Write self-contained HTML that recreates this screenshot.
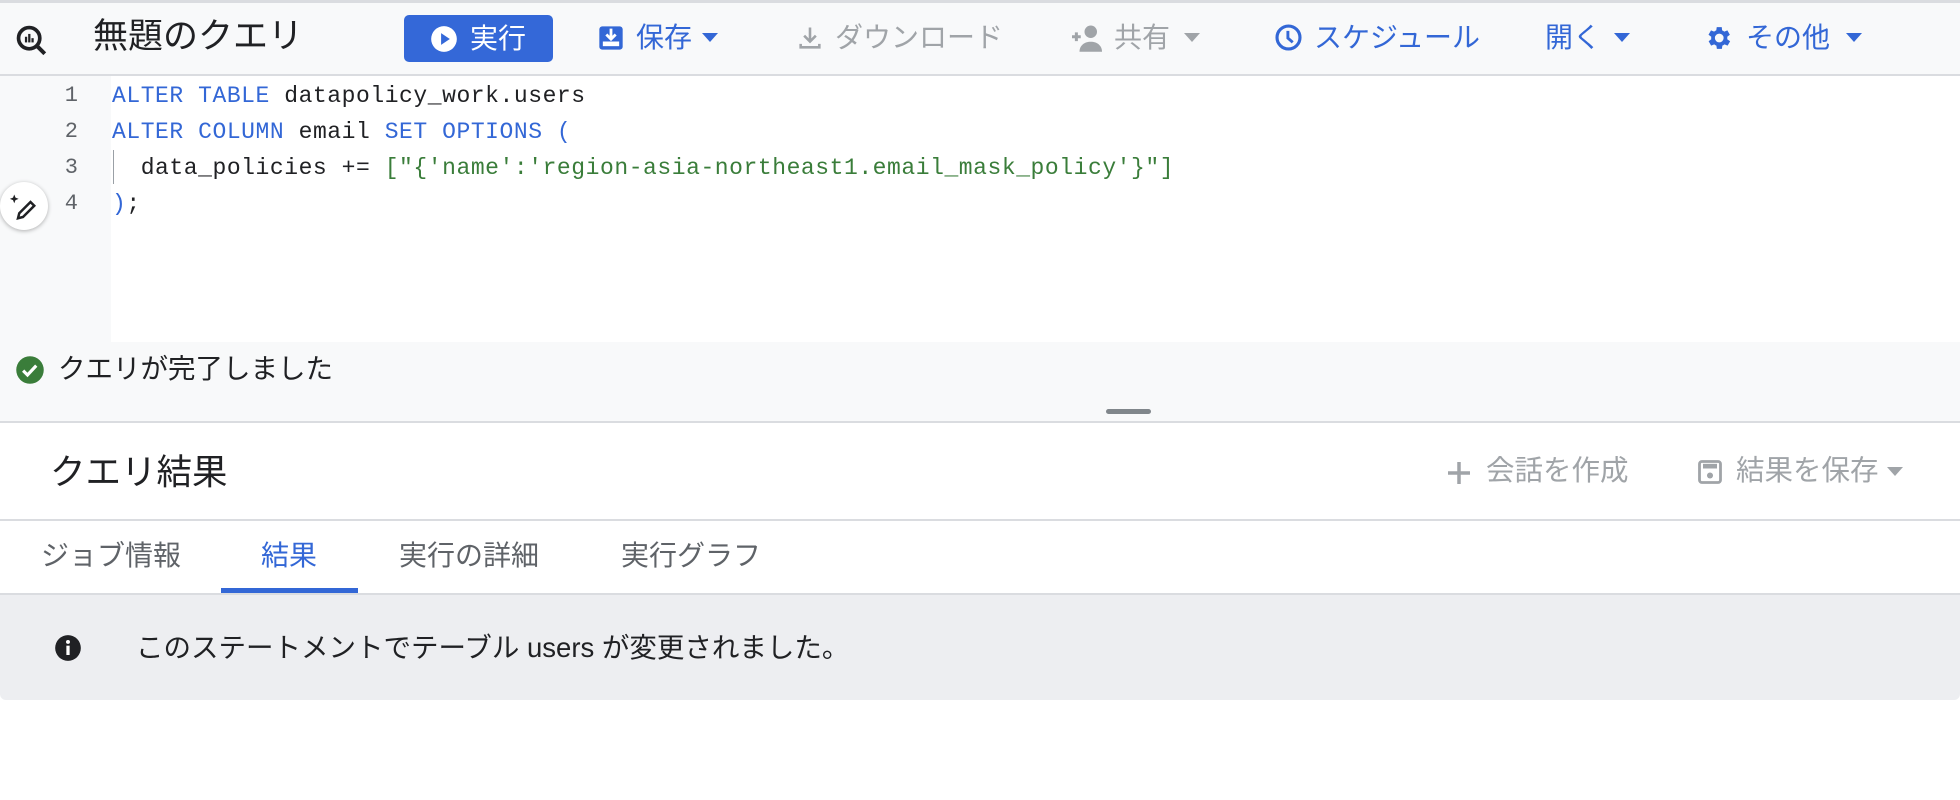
<!DOCTYPE html>
<html><head><meta charset="utf-8"><style>
*{margin:0;padding:0;box-sizing:border-box}
body{width:1960px;height:800px;background:#fff;position:relative;overflow:hidden;font-family:"Liberation Sans","Noto Sans CJK JP",sans-serif;color:#202124}
.a{position:absolute;white-space:nowrap}
.tb{font-size:28px;line-height:32px;color:#3367d6}
.g{color:#a0a4a8}
.code{font-family:"Liberation Mono",monospace;font-size:23px;line-height:36px;letter-spacing:0.55px}
.kw{color:#3367d6}.st{color:#3a7d3a}
.ln{font-family:"Liberation Mono",monospace;font-size:22px;color:#5f6368;width:30px;text-align:right}
</style></head><body>
<!-- toolbar -->
<div class="a" style="left:0;top:0;width:1960px;height:76px;background:#f8f9fa;border-top:3px solid #dadce0;border-bottom:2px solid #dadce0"></div>
<svg class="a" style="left:15px;top:24px" width="34" height="34" viewBox="0 0 24 24"><circle cx="10" cy="10" r="7.5" fill="none" stroke="#202124" stroke-width="2.6"/><line x1="15.5" y1="15.5" x2="21" y2="21" stroke="#202124" stroke-width="2.8"/><rect x="7" y="9" width="1.6" height="4" fill="#202124"/><rect x="9.3" y="7" width="1.6" height="6" fill="#202124"/><rect x="11.6" y="10" width="1.6" height="3" fill="#202124"/></svg>
<div class="a" style="left:93px;top:16px;font-size:35px;line-height:42px;color:#202124">無題のクエリ</div>
<div class="a" style="left:404px;top:15px;width:149px;height:47px;background:#3468d8;border-radius:5px"></div>
<svg class="a" style="left:430px;top:25px" width="28" height="28" viewBox="0 0 24 24"><circle cx="12" cy="12" r="11" fill="#fff"/><path d="M9.5 7v10l7.5-5z" fill="#3468d8"/></svg>
<div class="a tb" style="left:470px;top:23px;color:#fff">実行</div>
<svg class="a" style="left:597px;top:24px" width="28" height="28" viewBox="0 0 24 24"><rect x="2" y="2" width="20" height="20" rx="2.5" fill="#3367d6"/><path d="M12 4v8M8 9l4 4 4-4" stroke="#fff" stroke-width="2.4" fill="none"/><rect x="5" y="15" width="14" height="4" fill="#fff"/></svg>
<div class="a tb" style="left:636px;top:22px">保存</div>
<svg class="a" style="left:702px;top:33px" width="16" height="10"><path d="M0 0h16L8 9z" fill="#3367d6"/></svg>
<svg class="a" style="left:796px;top:24px" width="28" height="28" viewBox="0 0 24 24"><path d="M12 3v12M7 10l5 5 5-5M4 17v3h16v-3" stroke="#a0a4a8" stroke-width="2.2" fill="none"/></svg>
<div class="a tb g" style="left:835px;top:22px">ダウンロード</div>
<svg class="a" style="left:1070px;top:23px" width="34" height="30" viewBox="0 0 26 24"><path d="M1 11h7M4.5 7.5v7" stroke="#a0a4a8" stroke-width="2.4"/><circle cx="16" cy="7" r="5" fill="#a0a4a8"/><path d="M7 23c0-5 4-8 9-8s9 3 9 8z" fill="#a0a4a8"/></svg>
<div class="a tb g" style="left:1114px;top:22px">共有</div>
<svg class="a" style="left:1184px;top:33px" width="16" height="10"><path d="M0 0h16L8 9z" fill="#a0a4a8"/></svg>
<svg class="a" style="left:1274px;top:23px" width="29" height="29" viewBox="0 0 24 24"><circle cx="12" cy="12" r="9.5" fill="none" stroke="#3367d6" stroke-width="2.6"/><path d="M11.5 6.5v6l4 3.5" stroke="#3367d6" stroke-width="2.4" fill="none"/></svg>
<div class="a tb" style="left:1314px;top:22px">スケジュール</div>
<div class="a tb" style="left:1545px;top:22px">開く</div>
<svg class="a" style="left:1614px;top:33px" width="16" height="10"><path d="M0 0h16L8 9z" fill="#3367d6"/></svg>
<svg class="a" style="left:1703px;top:23px" width="30" height="30" viewBox="0 0 24 24"><path fill="#3367d6" d="M19.4 13a7.5 7.5 0 000-2l2.1-1.6-2-3.5-2.5 1a7 7 0 00-1.7-1L15 3.3h-4l-.4 2.6a7 7 0 00-1.7 1l-2.5-1-2 3.5L6.6 11a7.5 7.5 0 000 2l-2.1 1.6 2 3.5 2.5-1a7 7 0 001.7 1l.4 2.6h4l.4-2.6a7 7 0 001.7-1l2.5 1 2-3.5zM13 15.5a3.5 3.5 0 110-7 3.5 3.5 0 010 7z"/></svg>
<div class="a tb" style="left:1746px;top:22px">その他</div>
<svg class="a" style="left:1846px;top:33px" width="16" height="10"><path d="M0 0h16L8 9z" fill="#3367d6"/></svg>
<!-- editor -->
<div class="a" style="left:0;top:76px;width:111px;height:266px;background:#f8f9fa"></div>
<div class="a ln" style="left:48px;top:78px;line-height:36px">1<br>2<br>3<br>4</div>
<div class="a code" style="left:112px;top:78px">
<div><span class="kw">ALTER TABLE</span> datapolicy_work.users</div>
<div><span class="kw">ALTER COLUMN</span> email <span class="kw">SET OPTIONS (</span></div>
<div>&nbsp;&nbsp;data_policies += <span class="st">["{'name':'region-asia-northeast1.email_mask_policy'}"]</span></div>
<div><span class="kw">)</span>;</div>
</div>
<div class="a" style="left:113px;top:150px;width:1px;height:34px;background:#9aa0a6"></div>
<div class="a" style="left:0;top:182px;width:48px;height:48px;border-radius:50%;background:#fff;box-shadow:0 1px 4px rgba(0,0,0,.3)"></div>
<svg class="a" style="left:8px;top:192px" width="30" height="30" viewBox="0 0 24 24"><path d="M5 2l1 2.5L8.5 5.5 6 6.5 5 9 4 6.5 1.5 5.5 4 4.5z" fill="#202124"/><path d="M8 21l1-4L18 8l3 3-9 9z" fill="none" stroke="#202124" stroke-width="2"/></svg>
<!-- status -->
<div class="a" style="left:0;top:342px;width:1960px;height:80px;background:#f8f9fa"></div>
<svg class="a" style="left:15px;top:355px" width="30" height="30" viewBox="0 0 24 24"><circle cx="12" cy="12" r="11" fill="#3a7d3a"/><path d="M6.5 12.5l3.5 3.5 7-7.5" stroke="#fff" stroke-width="2.5" fill="none"/></svg>
<div class="a" style="left:58px;top:352px;font-size:27.5px;line-height:34px">クエリが完了しました</div>
<div class="a" style="left:1106px;top:409px;width:45px;height:5px;border-radius:3px;background:#80868b"></div>
<div class="a" style="left:0;top:421px;width:1960px;height:2px;background:#dadce0"></div>
<!-- results header -->
<div class="a" style="left:50px;top:451px;font-size:35.5px;line-height:42px">クエリ結果</div>
<svg class="a" style="left:1446px;top:460px" width="26" height="26"><path d="M13 2v22M2 13h22" stroke="#a0a4a8" stroke-width="3.5"/></svg>
<div class="a tb g" style="left:1486px;top:455px;font-size:28.5px">会話を作成</div>
<svg class="a" style="left:1696px;top:458px" width="28" height="28" viewBox="0 0 24 24"><rect x="3" y="3" width="18" height="18" rx="2" fill="none" stroke="#a0a4a8" stroke-width="2.4"/><rect x="6" y="5" width="12" height="4" fill="#a0a4a8"/><circle cx="12" cy="15" r="2.6" fill="#a0a4a8"/></svg>
<div class="a tb g" style="left:1736px;top:455px;font-size:28.5px">結果を保存</div>
<svg class="a" style="left:1887px;top:467px" width="16" height="10"><path d="M0 0h16L8 9z" fill="#a0a4a8"/></svg>
<div class="a" style="left:0;top:519px;width:1960px;height:2px;background:#dadce0"></div>
<!-- tabs -->
<div class="a" style="left:41px;top:539px;font-size:28px;line-height:34px;color:#5f6368">ジョブ情報</div>
<div class="a" style="left:261px;top:539px;font-size:28px;line-height:34px;color:#3367d6">結果</div>
<div class="a" style="left:399px;top:539px;font-size:28px;line-height:34px;color:#5f6368">実行の詳細</div>
<div class="a" style="left:621px;top:539px;font-size:28px;line-height:34px;color:#5f6368">実行グラフ</div>
<div class="a" style="left:221px;top:588px;width:137px;height:5px;background:#3367d6"></div>
<div class="a" style="left:0;top:593px;width:1960px;height:2px;background:#dadce0"></div>
<!-- info -->
<div class="a" style="left:0;top:595px;width:1960px;height:105px;background:#edeef1;border-radius:0 0 6px 6px"></div>
<svg class="a" style="left:54px;top:634px" width="28" height="28" viewBox="0 0 24 24"><circle cx="12" cy="12" r="11" fill="#202124"/><rect x="10.6" y="10" width="2.8" height="8" fill="#fff"/><circle cx="12" cy="6.8" r="1.7" fill="#fff"/></svg>
<div class="a" style="left:136px;top:631px;font-size:27.5px;line-height:34px">このステートメントでテーブル users が変更されました。</div>
</body></html>
